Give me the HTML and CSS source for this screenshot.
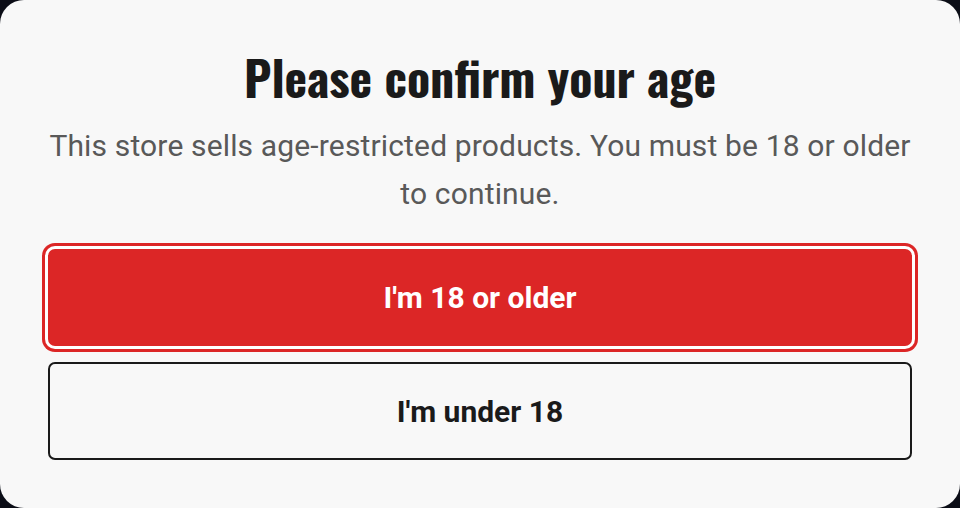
FILE: index.html
```html
<!DOCTYPE html>
<html>
<head>
    <title>Age check</title>
    <link rel="stylesheet" href="styles.css">
</head>
<body>
    <div class="modal">
        <h1 class="title">Please confirm your age</h1>
        <p class="note">This store sells age-restricted products. You must be 18 or older to continue.</p>
        <div class="actions">
            <button type="button" class="btn btn-yes">I'm 18 or older</button>
            <button type="button" class="btn btn-no">I'm under 18</button>
        </div>
    </div>
</body>
</html>
```

FILE: styles.css
```css
body {
    margin: 0;
    padding: 0;
    background-color: #0b0d16;
    font-family: Roboto, "Liberation Sans", sans-serif;
}
.modal {
    box-sizing: border-box;
    width: 960px;
    height: 508px;
    padding: 45px 48px;
    border-radius: 24px;
    background-color: #f8f8f8;
    text-align: center;
}
.title {
    margin: 0;
    font-family: Oswald, "Liberation Sans Narrow", "DejaVu Sans Condensed", sans-serif;
    font-weight: 700;
    font-size: 48px;
    line-height: 64px;
    color: #1a1a1a;
}
.note {
    margin: 13px 0 0;
    font-size: 30px;
    line-height: 48px;
    letter-spacing: 0.15px;
    color: #595959;
}
.actions {
    display: flex;
    flex-direction: column;
    gap: 16px;
    margin-top: 31px;
}
.btn {
    height: 97px;
    border-radius: 7px;
    font-family: Roboto, "Liberation Sans", sans-serif;
    font-size: 30px;
    font-weight: 700;
    cursor: pointer;
}
.btn-yes {
    border: none;
    background-color: #dc2626;
    color: #ffffff;
    box-shadow: 0 0 0 3px #ffffff, 0 0 0 6px #dc2626;
}
.btn-no {
    height: 98px;
    border: 2px solid #1a1a1a;
    background-color: #f8f8f8;
    color: #1a1a1a;
}
```
